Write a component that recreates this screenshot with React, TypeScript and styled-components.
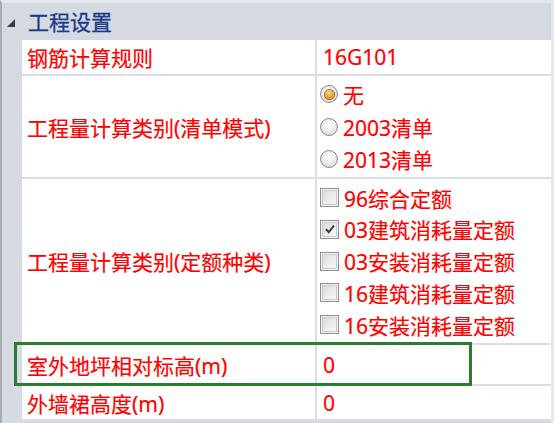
import React from 'react';
import styled, { createGlobalStyle } from 'styled-components';

const Global = createGlobalStyle`
  html, body { margin: 0; padding: 0; background: #ffffff; }
  body { font-family: "Noto Sans", "Noto Sans CJK SC", sans-serif; }
`;

const Panel = styled.div`
  width: 554px;
  height: 423px;
  box-sizing: border-box;
  overflow: hidden;
  background: #d4d9e2;
  border-top: 3px solid #e4e7ec;
  border-left: 2px solid #a7abb3;
  border-right: 3px solid #e6e8ec;
  display: flex;
  flex-direction: column;
`;

const Header = styled.div`
  height: 37px;
  flex: none;
  display: flex;
  align-items: center;
  padding-left: 5px;
  gap: 13px;
`;

const Caret = styled.span`
  width: 0;
  height: 0;
  border-style: solid;
  border-width: 0 0 8px 8px;
  border-color: transparent transparent #3a3a3a transparent;
  margin-top: 2px;
`;

const Title = styled.span`
  color: #1a3a8c;
  font-size: 21px;
  line-height: 1;
  font-family: "Noto Sans CJK SC", sans-serif;
  -webkit-text-stroke: 0.3px #1a3a8c;
`;

const Body = styled.div`
  margin-left: 20px;
  display: flex;
  flex-direction: column;
`;

const Row = styled.div<{ $h: number }>`
  position: relative;
  display: grid;
  grid-template-columns: 295px 1fr;
  height: ${(p) => p.$h}px;
  border-bottom: 2px solid #dadde5;
  background: #ffffff;
`;

const LabelCell = styled.div`
  display: flex;
  align-items: center;
  padding-left: 5px;
  border-right: 2px solid #dadde5;
  color: #ff0000;
  font-size: 21px;
  white-space: nowrap;
  -webkit-text-stroke: 0.2px #ff0000;
`;

const ValueCell = styled.div`
  display: flex;
  align-items: center;
  padding-left: 6px;
  color: #ff0000;
  font-size: 21px;
  white-space: nowrap;
  -webkit-text-stroke: 0.2px #ff0000;
`;

const OptionList = styled.div<{ $item: number }>`
  display: flex;
  flex-direction: column;
  justify-content: center;
  padding-left: 3px;
  & > * {
    height: ${(p) => p.$item}px;
  }
`;

const Option = styled.div`
  display: flex;
  align-items: center;
  gap: 5px;
  color: #ff0000;
  font-size: 21px;
  white-space: nowrap;
  -webkit-text-stroke: 0.2px #ff0000;
`;

const RadioDot = styled.span<{ $on?: boolean }>`
  flex: none;
  width: 18px;
  height: 18px;
  box-sizing: border-box;
  border-radius: 50%;
  border: 1px solid #8c8d8e;
  background: radial-gradient(circle at 50% 40%, #ffffff 0%, #e9e9e9 55%, #c9c9c9 100%);
  display: flex;
  align-items: center;
  justify-content: center;
  &::after {
    content: '';
    width: 9px;
    height: 9px;
    border-radius: 50%;
    display: ${(p) => (p.$on ? 'block' : 'none')};
    background: radial-gradient(circle at 45% 35%, #ffe39a 0%, #f3a83a 45%, #c96d00 100%);
    box-shadow: 0 0 0 1px #b06a10;
  }
`;

const CheckBox = styled.span`
  flex: none;
  width: 19px;
  height: 19px;
  box-sizing: border-box;
  border: 1px solid #8e8e8e;
  box-shadow: inset 0 0 0 1px #f4f4f4, inset 0 0 0 2px #c9c9c9;
  background: linear-gradient(135deg, #d6d6d6 0%, #eeeeee 60%, #fafafa 100%);
  display: flex;
  align-items: center;
  justify-content: center;
`;

const Highlight = styled.div`
  position: absolute;
  left: -8px;
  top: -3px;
  width: 458px;
  height: 44px;
  box-sizing: border-box;
  border: 3px solid #2b7c2e;
  pointer-events: none;
`;

const Radio = ({ on, label }: { on?: boolean; label: string }) => (
  <Option>
    <RadioDot $on={on} />
    <span>{label}</span>
  </Option>
);

const Check = ({ on, label }: { on?: boolean; label: string }) => (
  <Option>
    <CheckBox>
      {on && (
        <svg width="12" height="12" viewBox="0 0 12 12">
          <path d="M2 6.2 L4.8 9.2 L10 2.5" fill="none" stroke="#3a3a3a" strokeWidth="2" />
        </svg>
      )}
    </CheckBox>
    <span>{label}</span>
  </Option>
);

export default function App() {
  return (
    <>
      <Global />
      <Panel>
        <Header>
          <Caret />
          <Title>工程设置</Title>
        </Header>
        <Body>
          <Row $h={34}>
            <LabelCell>钢筋计算规则</LabelCell>
            <ValueCell>16G101</ValueCell>
          </Row>
          <Row $h={101}>
            <LabelCell>工程量计算类别(清单模式)</LabelCell>
            <OptionList $item={32.5}>
              <Radio on label="无" />
              <Radio label="2003清单" />
              <Radio label="2013清单" />
            </OptionList>
          </Row>
          <Row $h={164}>
            <LabelCell>工程量计算类别(定额种类)</LabelCell>
            <OptionList $item={31.75}>
              <Check label="96综合定额" />
              <Check on label="03建筑消耗量定额" />
              <Check label="03安装消耗量定额" />
              <Check label="16建筑消耗量定额" />
              <Check label="16安装消耗量定额" />
            </OptionList>
          </Row>
          <Row $h={39}>
            <LabelCell>室外地坪相对标高(m)</LabelCell>
            <ValueCell>0</ValueCell>
            <Highlight />
          </Row>
          <Row $h={33}>
            <LabelCell>外墙裙高度(m)</LabelCell>
            <ValueCell>0</ValueCell>
          </Row>
        </Body>
      </Panel>
    </>
  );
}
